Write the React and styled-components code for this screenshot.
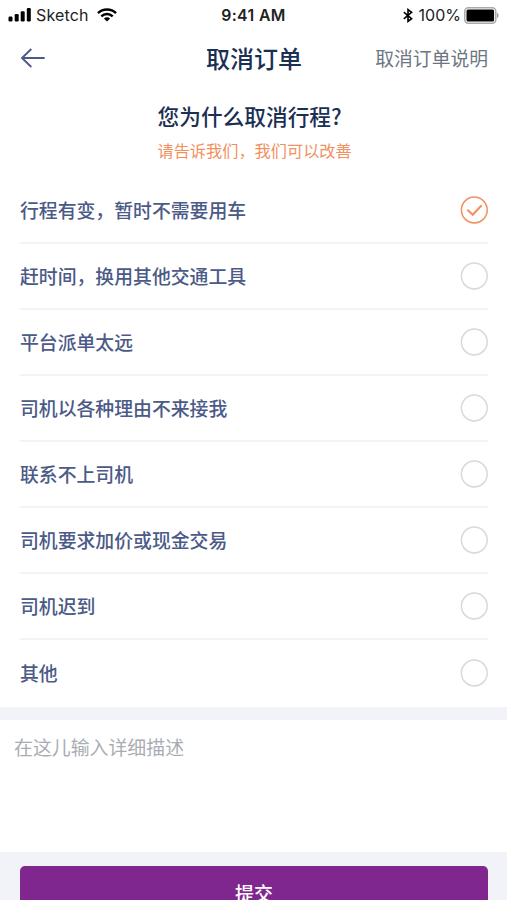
import {useState} from 'react';
import styled, {createGlobalStyle} from 'styled-components';

const Color = {
  navy: '#1b2f54',
  slate: '#4b5a86',
  gray: '#6c7683',
  placeholder: '#a9adb3',
  orange: '#f2905f',
  purple: '#80278f',
  line: '#f3f3f4',
  band: '#f1f3f8',
};

const GlobalStyle = createGlobalStyle`
  * {
    box-sizing: border-box;
  }
  body {
    margin: 0;
    background-color: #fff;
    font-family: 'Noto Sans CJK SC', sans-serif;
    overflow: hidden;
  }
`;

const Screen = styled.div`
  display: flex;
  flex-direction: column;
  height: 900px;
  overflow: hidden;
`;

const StatusBar = styled.div`
  display: grid;
  grid-template-columns: 1fr max-content 1fr;
  align-items: center;
  flex: none;
  height: 30px;
  padding: 0 8px;
  font-family: Inter, sans-serif;
  font-size: 16px;
  color: #222;
`;

const StatusGroup = styled.div`
  display: flex;
  align-items: center;
  justify-content: ${(props) => (props.$end ? 'flex-end' : 'flex-start')};
`;

const Carrier = styled.span`
  margin: 0 8px 0 4px;
  letter-spacing: 0.15px;
`;

const Clock = styled.span`
  font-size: 15.8px;
  font-weight: 600;
  letter-spacing: 0.4px;
`;

const BatteryLevel = styled.span`
  margin: 0 3px 0 6px;
  font-size: 16px;
`;

const Header = styled.header`
  display: grid;
  grid-template-columns: 1fr max-content 1fr;
  align-items: center;
  flex: none;
  height: 56px;
  padding: 0 19px 0 20px;
`;

const BackButton = styled.button`
  display: flex;
  width: max-content;
  padding: 0;
  border: none;
  background: none;
`;

const Title = styled.h1`
  margin: 0;
  font-size: 24px;
  line-height: 36px;
  font-weight: 500;
  color: ${Color['navy']};
`;

const HelpLink = styled.span`
  justify-self: end;
  font-size: 18.8px;
  line-height: 28px;
  color: ${Color['gray']};
`;

const Question = styled.div`
  flex: none;
  height: 91.6px;
  padding: 14px 0 0 157.5px;
`;

const QuestionTitle = styled.h2`
  margin: 0;
  font-size: 21.7px;
  line-height: 32px;
  font-weight: 500;
  color: ${Color['navy']};
`;

const QuestionHint = styled.p`
  margin: 6px 0 0;
  font-size: 16.2px;
  line-height: 24px;
  color: ${Color['orange']};
`;

const ReasonList = styled.ul`
  flex: none;
  margin: 0;
  padding: 0 19px 0 20px;
  list-style: none;
`;

const Reason = styled.li`
  display: flex;
  align-items: center;
  justify-content: space-between;
  height: 66.14px;
  border-bottom: 2px solid ${Color['line']};
  font-size: 18.85px;
  line-height: 28px;
  font-weight: 500;
  color: ${Color['slate']};

  &:last-child {
    border-bottom-color: transparent;
  }
`;

const Description = styled.textarea`
  flex: none;
  display: block;
  width: 100%;
  height: 145px;
  padding: 13px 14px;
  border: none;
  border-top: 13px solid ${Color['band']};
  outline: none;
  resize: none;
  font-family: inherit;
  font-size: 18.9px;
  line-height: 28px;

  &::placeholder {
    color: ${Color['placeholder']};
  }
`;

const Footer = styled.footer`
  flex: none;
  padding: 14px 19px 14px 20px;
  background-color: ${Color['band']};
`;

const SubmitButton = styled.button`
  display: block;
  width: 100%;
  height: 54px;
  padding: 0;
  border: none;
  border-radius: 5px;
  background-color: ${Color['purple']};
  font-family: inherit;
  font-size: 19px;
  line-height: 28px;
  font-weight: 500;
  color: #fff;
`;

const reasons = [
  '行程有变，暂时不需要用车',
  '赶时间，换用其他交通工具',
  '平台派单太远',
  '司机以各种理由不来接我',
  '联系不上司机',
  '司机要求加价或现金交易',
  '司机迟到',
  '其他',
];

const SignalIcon = () => (
  <svg width="24" height="14" viewBox="0 0 24 14">
    <rect x="0.5" y="8.5" width="4" height="5" rx="1.2" />
    <rect x="6.7" y="6" width="4" height="7.5" rx="1.2" />
    <rect x="12.7" y="3.2" width="4" height="10.3" rx="1.2" />
    <rect x="18.8" y="0" width="4" height="13.5" rx="1.2" />
  </svg>
);

const WifiIcon = () => (
  <svg width="20" height="14" viewBox="0 0 20 14" fill="none" stroke="#000" strokeWidth="2.5">
    <path d="M1 5.1C6 .3 14 .3 19 5.1" />
    <path d="M4.3 8.4c3.2-3.1 8.2-3.1 11.4 0" />
    <path d="M6.9 10.5c1.8-1.6 4.4-1.6 6.2 0L10 13.6z" fill="#000" stroke="none" />
  </svg>
);

const BluetoothIcon = () => (
  <svg width="10" height="15" viewBox="0 0 10 15" fill="none" stroke="#000" strokeWidth="1.6">
    <path d="M.8 4.1l7.8 6.5L5 13.3V1.7l3.6 2.7L.8 10.9" />
  </svg>
);

const BatteryIcon = () => (
  <svg width="35" height="17" viewBox="0 0 35 17">
    <rect x="0.8" y="0.8" width="31" height="15.4" rx="3.5" fill="#fff" stroke="#aaa" strokeWidth="1.5" />
    <rect x="2.5" y="2.5" width="27.6" height="12" rx="1.5" />
    <path d="M33 5.8c2 .8 2 4.6 0 5.4z" fill="#999" />
  </svg>
);

const BackIcon = () => (
  <svg width="26" height="20" viewBox="0 0 26 20" fill="none" stroke={Color['slate']} strokeWidth="1.9">
    <path d="M11.3 1L2 10l9.3 9M2 10h22.7" />
  </svg>
);

const RadioIcon = (props) => (
  <svg width="28" height="28" viewBox="0 0 28 28" fill="none" stroke={props.checked ? Color['orange'] : '#d9d9da'}>
    <circle cx="14.3" cy="14" r="12.9" strokeWidth="1.5" />
    {props.checked && <path d="M7.3 13.7l5.5 5L21.7 9.2" strokeWidth="2.1" />}
  </svg>
);

export default function App() {
  const [selected, setSelected] = useState(0);

  return (
    <Screen>
      <GlobalStyle />
      <StatusBar>
        <StatusGroup>
          <SignalIcon />
          <Carrier>Sketch</Carrier>
          <WifiIcon />
        </StatusGroup>
        <Clock>9:41 AM</Clock>
        <StatusGroup $end>
          <BluetoothIcon />
          <BatteryLevel>100%</BatteryLevel>
          <BatteryIcon />
        </StatusGroup>
      </StatusBar>
      <Header>
        <BackButton>
          <BackIcon />
        </BackButton>
        <Title>取消订单</Title>
        <HelpLink>取消订单说明</HelpLink>
      </Header>
      <Question>
        <QuestionTitle>您为什么取消行程?</QuestionTitle>
        <QuestionHint>请告诉我们，我们可以改善</QuestionHint>
      </Question>
      <ReasonList>
        {reasons.map((reason, index) => {
          return (
            <Reason key={reason} onClick={() => setSelected(index)}>
              {reason}
              <RadioIcon checked={index === selected} />
            </Reason>
          );
        })}
      </ReasonList>
      <Description placeholder="在这儿输入详细描述" />
      <Footer>
        <SubmitButton>提交</SubmitButton>
      </Footer>
    </Screen>
  );
}
